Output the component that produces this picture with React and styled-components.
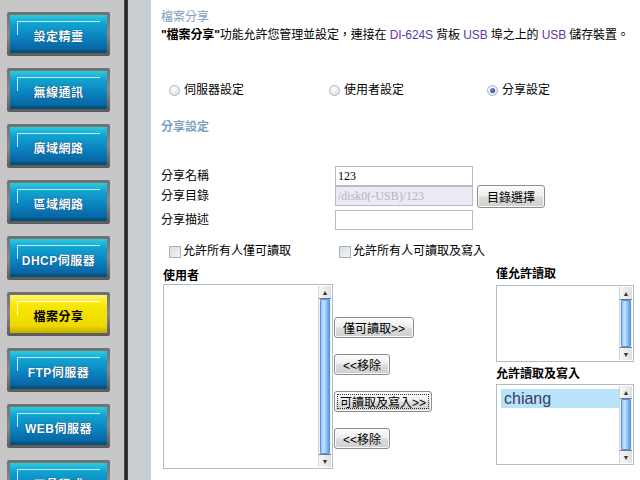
import React from "react";
import styled, { createGlobalStyle, css } from "styled-components";

const GlobalStyle = createGlobalStyle`
  html, body {
    margin: 0;
    padding: 0;
    width: 640px;
    height: 480px;
    overflow: hidden;
    background: #fff;
  }
  body {
    font-family: "Liberation Sans", "Noto Sans CJK TC", sans-serif;
    font-size: 12px;
    color: #000;
  }
`;

const cjk = `"Liberation Sans", "Noto Sans CJK TC", sans-serif`;

const Page = styled.div`
  display: flex;
  width: 640px;
  height: 480px;
  overflow: hidden;
`;

const Sidebar = styled.nav`
  width: 124px;
  height: 480px;
  overflow: hidden;
  flex-shrink: 0;
  background: #c7c7c7;
  display: flex;
  flex-direction: column;
  gap: 12px;
  padding: 12px 0 0 7px;
  box-sizing: border-box;
`;

const Divider = styled.div`
  width: 4px;
  flex-shrink: 0;
  background: linear-gradient(90deg, #555 0%, #1c1c1c 50%, #444 100%);
`;

const Gutter = styled.div`
  width: 23px;
  flex-shrink: 0;
  background: #c9ced2;
`;

const NavButton = styled.div`
  width: 103px;
  height: 44px;
  flex-shrink: 0;
  box-sizing: border-box;
  padding: 3px;
  background: linear-gradient(180deg, #6f6f6f 0%, #8a8a8a 50%, #5a5a5a 100%);
  border-radius: 2px;
`;

const NavFace = styled.div`
  position: relative;
  height: 100%;
  display: flex;
  align-items: center;
  justify-content: center;
  font-family: ${cjk};
  font-weight: 700;
  font-size: 12px;
  letter-spacing: 0.5px;
  ${(p) =>
    p.$active
      ? css`
          background: linear-gradient(180deg, #fff46a 0%, #f7e600 30%, #efd900 80%, #c4b000 100%);
          color: #000;
        `
      : css`
          background: linear-gradient(180deg, #2ccbe0 0%, #12a3cf 22%, #0a80c0 60%, #0767a2 88%, #04466e 100%);
          color: #fff;
          text-shadow: 0 0 1px #024;
        `}

  &::before {
    content: "";
    position: absolute;
    left: 7px;
    top: 6px;
    width: 82px;
    height: 13px;
    border-top: 1px solid ${(p) => (p.$active ? "#fffbd0" : "#bfeeff")};
    border-left: 1px solid ${(p) => (p.$active ? "#fffbd0" : "#bfeeff")};
  }

  span {
    position: relative;
    padding-top: 2px;
  }
`;

const Content = styled.main`
  flex: 1;
  background: #fff;
  padding: 10px 0 0 10px;
  box-sizing: border-box;
  font-family: ${cjk};
`;

const PageTitle = styled.div`
  color: #7b9fc0;
  font-size: 12px;
  line-height: 15px;
`;

const Desc = styled.div`
  margin-top: 3px;
  font-size: 12px;
  line-height: 15px;
  white-space: nowrap;
  letter-spacing: -0.1px;
  b {
    font-weight: 700;
  }
`;

const Accent = styled.span`
  color: #5b3aa8;
`;

const RadioRow = styled.div`
  margin-top: 40px;
  display: grid;
  grid-template-columns: 160px 158px auto;
  padding-left: 8px;
`;

const RadioItem = styled.label`
  display: flex;
  align-items: center;
  gap: 4px;
  font-size: 12px;
  line-height: 15px;
`;

const RadioDot = styled.span`
  width: 9px;
  height: 9px;
  border-radius: 50%;
  border: 1px solid #a9b4c0;
  background: radial-gradient(circle at 40% 35%, #ffffff 0%, #e6ebf0 60%, #c9d2dc 100%);
  display: flex;
  align-items: center;
  justify-content: center;
  &::after {
    content: "";
    width: 5px;
    height: 5px;
    border-radius: 50%;
    background: ${(p) => (p.$checked ? "radial-gradient(circle at 35% 35%, #7d8dd8, #1a2a8a)" : "transparent")};
  }
`;

const SectionTitle = styled.div`
  margin-top: 22px;
  color: #7b9fc0;
  font-weight: 700;
  font-size: 12px;
  line-height: 15px;
`;

const Form = styled.div`
  margin-top: 31px;
  display: grid;
  grid-template-columns: 174px 138px auto;
  grid-template-rows: 20px 20px 24px;
  align-items: center;
  & > :nth-child(n + 7) {
    align-self: end;
  }
`;

const FieldLabel = styled.div`
  font-size: 12px;
  line-height: 15px;
  ${(p) =>
    p.$last &&
    css`
      padding-bottom: 2px;
    `}
`;

const TextInput = styled.div`
  width: 138px;
  height: 20px;
  box-sizing: border-box;
  border: 1px solid #b9bcc6;
  background: ${(p) => (p.$disabled ? "#ebebf3" : "#fff")};
  color: ${(p) => (p.$disabled ? "#b4b4bf" : "#000")};
  font-family: "Liberation Serif", serif;
  font-size: 12px;
  line-height: 18px;
  padding-left: 2px;
`;

const PushButton = styled.button`
  font-family: ${cjk};
  font-size: 12px;
  color: #000;
  height: ${(p) => p.$h || 21}px;
  padding: 0 ${(p) => p.$px || 8}px;
  border: 1px solid #8d8d8d;
  border-radius: 3px;
  background: linear-gradient(180deg, #fdfdfd 0%, #eeeeee 45%, #dcdcdc 55%, #cfcfcf 100%);
  box-shadow: inset 0 0 0 1px #fafafa;
  margin-left: ${(p) => (p.$ml !== undefined ? p.$ml : 4)}px;
  justify-self: start;
  white-space: nowrap;
  ${(p) =>
    p.$focus &&
    css`
      outline: 1px dotted #333;
      outline-offset: -4px;
    `}
`;

const CheckRow = styled.div`
  margin-top: 14px;
  display: grid;
  grid-template-columns: 170px auto;
  padding-left: 8px;
`;

const CheckItem = styled.label`
  display: flex;
  align-items: center;
  gap: 2px;
  font-size: 12px;
  line-height: 15px;
`;

const CheckBox = styled.span`
  width: 10px;
  height: 10px;
  border: 1px solid #a7afb9;
  background: linear-gradient(135deg, #d9dee4 0%, #f2f4f6 100%);
`;

const Lists = styled.div`
  margin-top: 10px;
  display: flex;
  padding-left: 2px;
`;

const ListColumn = styled.div`
  display: flex;
  flex-direction: column;
`;

const ListLabel = styled.div`
  font-weight: 700;
  font-size: 12px;
  line-height: 14px;
  height: 14px;
  margin-top: ${(p) => p.$mt || 0}px;
`;

const ListBox = styled.div`
  width: ${(p) => p.$w}px;
  height: ${(p) => p.$h}px;
  margin-top: ${(p) => p.$mt || 0}px;
  box-sizing: border-box;
  border: 1px solid #b6b9c8;
  background: #fff;
  display: flex;
  padding: 1px;
`;

const ListItems = styled.div`
  flex: 1;
  padding: 3px 0 0 3px;
`;

const ListItem = styled.div`
  background: #b9e3f9;
  color: #3a3a6a;
  font-family: "Liberation Sans", sans-serif;
  font-size: 16px;
  line-height: 19px;
  height: 19px;
  padding-left: 3px;
`;

const Scrollbar = styled.div`
  width: 12px;
  display: flex;
  flex-direction: column;
  border-left: 1px solid #d0d4da;
  background: #f2f2f2;
`;

const Arrow = styled.div`
  height: 12px;
  display: flex;
  align-items: center;
  justify-content: center;
  font-size: 7px;
  color: #333;
  background: linear-gradient(90deg, #f6f6f6, #e0e0e0);
  border-${(p) => (p.$down ? "top" : "bottom")}: 1px solid #6e7a86;
  line-height: 1;
`;

const Thumb = styled.div`
  flex: 1;
  margin: 0 1px;
  border: 1px solid #5d8ed8;
  border-radius: 1px;
  background: linear-gradient(90deg, #8fc3f7 0%, #c7e4ff 35%, #98ccff 60%, #5e9ee6 100%);
`;

const MidButtons = styled.div`
  display: flex;
  flex-direction: column;
  gap: 16px;
  padding-top: 48px;
  width: 163px;
  align-items: flex-start;
`;

const Bar = () => (
  <Scrollbar>
    <Arrow>▲</Arrow>
    <Thumb />
    <Arrow $down>▼</Arrow>
  </Scrollbar>
);

const navItems = [
  "設定精靈",
  "無線通訊",
  "廣域網路",
  "區域網路",
  "DHCP伺服器",
  "檔案分享",
  "FTP伺服器",
  "WEB伺服器",
  "工具程式",
];

export default function App() {
  return (
    <Page>
      <GlobalStyle />
      <Sidebar>
        {navItems.map((label) => (
          <NavButton key={label}>
            <NavFace $active={label === "檔案分享"}>
              <span>{label}</span>
            </NavFace>
          </NavButton>
        ))}
      </Sidebar>
      <Divider />
      <Gutter />
      <Content>
        <PageTitle>檔案分享</PageTitle>
        <Desc>
          <b>"檔案分享"</b>功能允許您管理並設定，連接在 <Accent>DI-624S</Accent> 背板{" "}
          <Accent>USB</Accent> 埠之上的 <Accent>USB</Accent> 儲存裝置。
        </Desc>

        <RadioRow>
          <RadioItem>
            <RadioDot />
            伺服器設定
          </RadioItem>
          <RadioItem>
            <RadioDot />
            使用者設定
          </RadioItem>
          <RadioItem>
            <RadioDot $checked />
            分享設定
          </RadioItem>
        </RadioRow>

        <SectionTitle>分享設定</SectionTitle>

        <Form>
          <FieldLabel>分享名稱</FieldLabel>
          <TextInput>123</TextInput>
          <span />
          <FieldLabel>分享目錄</FieldLabel>
          <TextInput $disabled>/disk0(-USB)/123</TextInput>
          <PushButton $h={23} $px={9}>目錄選擇</PushButton>
          <FieldLabel $last>分享描述</FieldLabel>
          <TextInput />
          <span />
        </Form>

        <CheckRow>
          <CheckItem>
            <CheckBox />
            允許所有人僅可讀取
          </CheckItem>
          <CheckItem>
            <CheckBox />
            允許所有人可讀取及寫入
          </CheckItem>
        </CheckRow>

        <Lists>
          <ListColumn>
            <ListLabel>使用者</ListLabel>
            <ListBox $w={170} $h={185} $mt={1}>
              <ListItems />
              <Bar />
            </ListBox>
          </ListColumn>
          <MidButtons>
            <PushButton $ml={1} $px={8}>僅可讀取&gt;&gt;</PushButton>
            <PushButton $ml={1} $px={8}>&lt;&lt;移除</PushButton>
            <PushButton $ml={1} $px={5} $focus>可讀取及寫入&gt;&gt;</PushButton>
            <PushButton $ml={1} $px={8}>&lt;&lt;移除</PushButton>
          </MidButtons>
          <ListColumn>
            <ListLabel $mt={-2}>僅允許讀取</ListLabel>
            <ListBox $w={138} $h={77} $mt={4}>
              <ListItems />
              <Bar />
            </ListBox>
            <ListLabel $mt={5}>允許讀取及寫入</ListLabel>
            <ListBox $w={138} $h={81} $mt={3}>
              <ListItems>
                <ListItem>chiang</ListItem>
              </ListItems>
              <Bar />
            </ListBox>
          </ListColumn>
        </Lists>
      </Content>
    </Page>
  );
}
